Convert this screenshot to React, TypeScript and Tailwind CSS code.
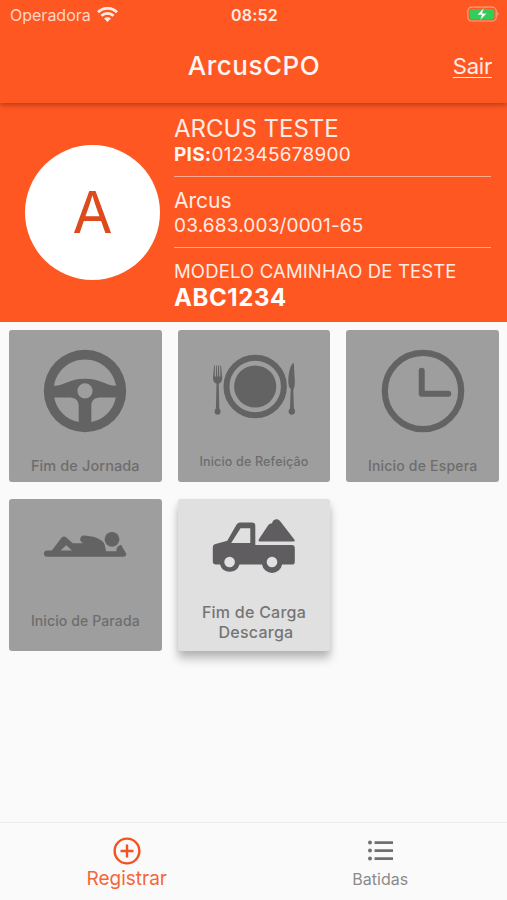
import type { ReactNode } from "react";

function WifiIcon() {
  return (
    <svg className="h-[16px] w-[21px]" viewBox="0 0 21 16" fill="none" stroke="#ffece4" strokeWidth="2.8">
      <path d="M1 5.2C6.3.1 14.7.1 20 5.2" />
      <path d="M4.4 8.800c3.5-3.3 8.7-3.3 12.2 0" />
      <path d="M10.500 14.900 7.100 11.600c1.800-1.800 5-1.800 6.800 0z" fill="#ffece4" stroke="none" />
    </svg>
  );
}

function BatteryIcon() {
  return (
    <svg className="-mt-[2px] h-[16px] w-[32px]" viewBox="0 0 32 16" fill="none">
      <rect x=".8" y="1.2" width="28.4" height="13.8" rx="3.8" stroke="#f6a384" strokeWidth="1.2" />
      <rect x="2.6" y="3" width="24.8" height="10.2" rx="2" fill="#34cb59" />
      <path d="M30.4 5.8c1.5.7 1.5 3.4 0 4.2z" fill="#f6a384" />
      <path d="M16.800 1.800 10 9h4.500l-1.500 5.400L20 7.200h-4.500z" fill="#fff" stroke="#34cb59" strokeWidth=".6" />
    </svg>
  );
}

function WheelIcon() {
  return (
    <svg className="h-[84px] w-[84px]" viewBox="0 0 84 84" fill="#646364">
      <path
        fillRule="evenodd"
        d="M42 .8a41.2 41.2 0 1 0 0 82.4A41.2 41.2 0 0 0 42 .8ZM11 36.8C13.500 21.500 26.500 10.500 42 10.500S70.500 21.500 73 36.800C63 37 58 29.700 42 29.700S21 37 11 36.800ZM11.200 48.500H27C33 48.500 35.700 52 35.700 57V73C23 70.500 13.500 61 11.200 48.500ZM48.300 73V57C48.300 52 51 48.500 57 48.500H72.800C70.500 61 61 70.500 48.300 73ZM42 34.200a7.600 7.600 0 1 1 0 15.200a7.600 7.600 0 0 1 0-15.200Z"
      />
    </svg>
  );
}

function MealIcon() {
  return (
    <svg className="h-[84px] w-[84px]" viewBox="0 0 84 84" fill="#646364">
      <circle cx="43.200" cy="37.500" r="28.700" fill="none" stroke="#646364" strokeWidth="6" />
      <circle cx="43.200" cy="37.500" r="21.100" />
      <path d="M2.100 16.500 1 29c0 3.500 1.600 5 3.500 5.800L3.900 59.500c-1.900 1.500-2 6.300 1.700 6.300s3.600-4.800 1.700-6.300L6.700 34.800C8.600 34 10.200 32.500 10.200 29L9.100 16.500H8.300L8.400 27.500H7.300L6.900 16.500H6L5.900 27.500H5.200L4.800 16.500H4L3.900 27.500H2.800L2.900 16.500z" />
      <path d="M81.800 14c-3.200.5-5.500 10-5.500 18 0 4 .8 6.500 2.400 8L78 59.500c-2.100 1.500-2 6.300 1.800 6.300s4-4.800 2.100-6.300L81.300 41c1.200-2.500 1.500-5 1.500-9z" />
    </svg>
  );
}

function ClockIcon() {
  return (
    <svg className="h-[84px] w-[84px]" viewBox="0 0 84 84" fill="none" stroke="#646364">
      <circle cx="42" cy="42" r="38.200" strokeWidth="6.200" />
      <path d="M40.700 21.800v23h26.500" strokeWidth="6" strokeLinecap="round" strokeLinejoin="round" />
    </svg>
  );
}

function RestIcon() {
  return (
    <svg className="h-[50px] w-[84px]" viewBox="0 17 84 50" fill="#646364">
      <path
        fillRule="evenodd"
        d="M4 55.700C-.2 55.700-.2 49.400 4 49.400h4.800L18.500 36.800c1.300-1.600 3.400-1.700 4.800-.3l6.500 5.700h10l-.5-.7c-3.800-1.700-2.200-7 1.500-7 7 .3 19.500 2.800 21 9.500l1.300 6.300h10.300c-.2-3.300 1-5.300 4.600-6.500l5 8.500c1 2.300-.7 3.400-2.800 3.400ZM17.500 49.400H29l-5.800-5.200Z"
      />
      <circle cx="69" cy="38.300" r="7.400" />
    </svg>
  );
}

function TruckIcon() {
  return (
    <svg className="h-[60px] w-[84px]" viewBox="0 22 84 60" fill="#5f5d60">
      <path
        fillRule="evenodd"
        d="M4 68.500c-2.200 0-3.200-1-3.200-3V51.500c0-2 .8-3 2.700-3.500l11.800-3.300L24 29.500c1.200-2.100 2.200-3 4.500-3H40c2.300 0 3.300 1 3.300 3V49h36.500c2 0 3 1 3 3v13.700c0 2-1 2.800-3 2.800h-9.700A10.200 10.200 0 0 1 50 68.500H27.500A10.200 10.200 0 0 1 8 68.500ZM19.200 47h19.100V32.300h-9.800ZM17.600 60.700a5.300 5.300 0 1 0 0 10.600a5.300 5.300 0 0 0 0-10.600ZM60 60.700a5.300 5.300 0 1 0 0 10.600a5.300 5.300 0 0 0 0-10.600Z"
      />
      <path d="M48.200 45.500c-1.700 0-2-.9-1.200-2.400L56 29.500c1.200-1.500 2.100-2 4-2.300 1-3.700 5-5.400 8-2.200l14.300 18.600c.8 1.200.4 1.900-1.100 1.900Z" />
    </svg>
  );
}

type CardProps = { icon: ReactNode; children: ReactNode; label: string; active?: boolean };

function Card({ icon, children, label, active }: CardProps) {
  return (
    <button
      className={
        "flex h-[152px] flex-col items-center justify-between rounded-[3px] pt-[19px] font-medium " +
        (active
          ? "bg-[#e0e0e0] text-[#757575] shadow-[0_8px_10px_rgba(0,0,0,0.24),0_2px_6px_rgba(0,0,0,0.08)] "
          : "bg-[#9e9e9e] text-[#6d6d6d] ") +
        label
      }
    >
      {icon}
      <span className="whitespace-nowrap">{children}</span>
    </button>
  );
}

export default function App() {
  return (
    <div className="flex h-[900px] w-[507px] flex-col overflow-hidden bg-[#fafafa] font-['Inter',sans-serif] text-[#ffece4]">
      <header className="z-10 h-[103px] shrink-0 bg-[#ff5722] shadow-[0_2px_5px_rgba(0,0,0,0.3)]">
        <div className="grid h-[30px] grid-cols-3 items-center pr-[8px] pl-[10px]">
          <div className="flex items-center gap-[6px]">
            <span className="text-[16px] text-[#ffd5c6]">Operadora</span>
            <WifiIcon />
          </div>
          <span className="text-center text-[16px] font-semibold tracking-[0.2px]">08:52</span>
          <div className="flex justify-end">
            <BatteryIcon />
          </div>
        </div>
        <div className="grid h-[73px] grid-cols-3 items-center px-[15px]">
          <span />
          <h1 className="pb-[2px] pl-px text-center text-[26px] font-medium tracking-[0.5px] text-[#fff6f1]">ArcusCPO</h1>
          <a className="text-right text-[22px] tracking-[-0.2px] underline decoration-1 underline-offset-[3px]">Sair</a>
        </div>
      </header>

      <section className="flex h-[219px] shrink-0 bg-[#ff5722] pr-[16px] pl-[25px]">
        <div className="mt-[42px] mr-[14px] flex h-[135px] w-[135px] shrink-0 items-center justify-center rounded-full bg-white text-[58px] text-[#dd4a1b]">
          A
        </div>
        <div className="flex flex-1 flex-col pt-[12px] whitespace-nowrap">
          <div className="flex h-[62px] flex-col border-b border-[#ffab91]">
            <span className="text-[24px] leading-[28px]">ARCUS TESTE</span>
            <span className="text-[19px] leading-[23px] tracking-[0.25px]">
              <b className="font-bold text-[#fff6f1]">PIS:</b>012345678900
            </span>
          </div>
          <div className="flex h-[71px] flex-col border-b border-[#ffab91] pt-[12px]">
            <span className="text-[21px] leading-[24px]">Arcus</span>
            <span className="text-[19px] leading-[25px] tracking-[0.17px]">03.683.003/0001-65</span>
          </div>
          <div className="flex flex-col pt-[10px]">
            <span className="text-[18.5px] leading-[26px] tracking-[0.15px]">MODELO CAMINHAO DE TESTE</span>
            <span className="text-[24px] leading-[28px] font-bold tracking-[0.6px] text-white">ABC1234</span>
          </div>
        </div>
      </section>

      <main className="flex-1 pt-[8px] pr-[8px] pl-[9px]">
        <div className="grid grid-cols-3 gap-x-[16px] gap-y-[16.5px]">
          <Card icon={<WheelIcon />} label="pb-[5px] text-[14.5px] leading-[22px] tracking-[0.1px]">
            Fim de Jornada
          </Card>
          <Card icon={<MealIcon />} label="pb-[9px] text-[12.5px] leading-[22px] tracking-[0.17px]">
            Inicio de Refeição
          </Card>
          <Card icon={<ClockIcon />} label="pb-[5px] text-[14px] leading-[22px] tracking-[0.2px]">
            Inicio de Espera
          </Card>
          <Card icon={<RestIcon />} label="pb-[19px] text-[14px] leading-[22px] tracking-[0.12px]">
            Inicio de Parada
          </Card>
          <Card active icon={<TruckIcon />} label="pb-[9px] text-[16px] leading-[20px] tracking-[0.25px]">
            Fim de Carga
            <br />
            <span className="pl-[4px]">Descarga</span>
          </Card>
        </div>
      </main>

      <nav className="grid h-[78px] shrink-0 grid-cols-2 border-t border-[#ececec] bg-[#fafafa]">
        <a className="flex flex-col items-center pt-[14px] text-[#f4673a]">
          <svg className="h-[28px] w-[28px]" viewBox="0 0 29 29" fill="none" stroke="#f4511e" strokeWidth="2.500">
            <circle cx="14.500" cy="14.500" r="12.800" />
            <path d="M14.500 7.800v13.400M7.800 14.500h13.400" />
          </svg>
          <span className="text-[19px] leading-[27px]">Registrar</span>
        </a>
        <a className="flex flex-col items-center pt-[14px] text-[#8a8a8a]">
          <svg className="h-[29px] w-[27px]" viewBox="0 0 27 29" fill="#707070">
            <circle cx="3" cy="5.600" r="2" />
            <circle cx="3" cy="13.600" r="2" />
            <circle cx="3" cy="21.600" r="2" />
            <path d="M7.500 4.300H26v2.600H7.500zM7.500 12.300H26v2.600H7.500zM7.500 20.300H26v2.600H7.500z" />
          </svg>
          <span className="text-[16px] leading-[27px]">Batidas</span>
        </a>
      </nav>
    </div>
  );
}
